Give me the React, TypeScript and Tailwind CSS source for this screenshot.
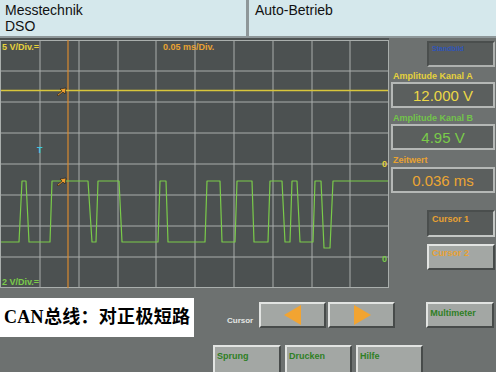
import React from "react";

const font = { fontFamily: '"Liberation Sans", Arial, sans-serif' };

// green channel B trace (svg coords, y offset -38)
const greenTrace: [number, number][] = [
  [1, 204], [19, 204], [22, 143], [26, 143], [29, 204], [50, 204], [52, 143],
  [88, 143], [92, 204], [96, 204], [98, 143], [119, 143], [122, 204], [158, 204],
  [160, 143], [166, 143], [168, 204], [205, 204], [207, 143], [220, 143],
  [222, 204], [235, 204], [237, 143], [252, 143], [254, 204], [268, 204],
  [270, 143], [282, 143], [285, 204], [290, 204], [292, 143], [297, 143],
  [300, 204], [313, 204], [315, 143], [321, 143], [324, 210], [330, 210],
  [333, 143], [388, 143],
];

const vLines = [40, 79, 118, 156, 195, 234, 273, 312, 350];
const hLines = [33, 64, 95, 126, 157, 188, 219];

function CursorMark({ x, y }: { x: number; y: number }) {
  return (
    <polygon
      transform={`translate(${x} ${y})`}
      points="9,0 3,1 5,3 0,7 1,8 6,4 8,6"
      fill="#f0a030"
      stroke="#1a1a1a"
      strokeWidth="0.6"
    />
  );
}

function Scope() {
  return (
    <svg width="389" height="252" viewBox="0 0 389 252" className="block shrink-0">
      <rect x="0" y="0" width="389" height="250" fill="#4c5151" />
      <rect x="0" y="250" width="389" height="2" fill="#6d7170" />
      {vLines.map((x) => (
        <line key={x} x1={x} y1="2" x2={x} y2="250" stroke="#a9aeac" strokeWidth="1" />
      ))}
      {hLines.map((y) => (
        <line key={y} x1="1" y1={y} x2="388" y2={y} stroke="#a9aeac" strokeWidth="1" />
      ))}
      <rect x="0.5" y="2.5" width="388" height="247" fill="none" stroke="#a9aeac" strokeWidth="1" />

      {/* cursor line */}
      <line x1="68" y1="2" x2="68" y2="250" stroke="#d98a30" strokeWidth="1.2" />

      {/* channel A */}
      <line x1="1" y1="52.5" x2="388" y2="52.5" stroke="#d8c63c" strokeWidth="1.3" />
      {/* channel B */}
      <polyline
        points={greenTrace.map((p) => p.join(",")).join(" ")}
        fill="none"
        stroke="#7acb4a"
        strokeWidth="1.2"
        strokeLinejoin="round"
      />

      <CursorMark x={57} y={50} />
      <CursorMark x={57} y={140} />

      <g style={font} fontWeight="bold" fontSize="9">
        <text x="2" y="12" fill="#e6d23c">5 V/Div.=</text>
        <text x="163" y="12" fill="#e8a232">0.05 ms/Div.</text>
        <text x="37" y="115" fill="#3ec8e0">T</text>
        <text x="382" y="129" fill="#e6d23c">0</text>
        <text x="382" y="224" fill="#7acb4a">0</text>
        <text x="2" y="247" fill="#7acb4a">2 V/Div.=</text>
      </g>
    </svg>
  );
}

function ValueBox({ value, color }: { value: string; color: string }) {
  return (
    <div
      className={`ml-[2px] w-[104px] h-[26px] border-2 border-[#b5b8b6] bg-[#5b5f5e] flex items-center justify-center text-[15px] leading-none ${color}`}
    >
      {value}
    </div>
  );
}

function RaisedButton({
  label,
  className,
  children,
}: {
  label?: string;
  className: string;
  children?: React.ReactNode;
}) {
  return (
    <div
      className={`bg-[#a3a7a4] border-2 border-t-[#e2e4e2] border-l-[#e2e4e2] border-b-[#474b4a] border-r-[#474b4a] text-[9px] font-bold text-[#2f7f24] leading-none pl-[2px] pt-[5px] ${className}`}
    >
      {label}
      {children}
    </div>
  );
}

export default function App() {
  return (
    <div className="w-[496px] h-[372px] overflow-hidden bg-[#6d7170] flex flex-col" style={font}>
      {/* header */}
      <div className="flex h-[38px] shrink-0 bg-[#8e9799] gap-[3px] pb-[2px]">
        <div className="w-[246px] bg-[#d5e8ec] pl-[5px] pt-[2px] text-[14px] leading-[16px] text-[#111]">
          <div>Messtechnik</div>
          <div>DSO</div>
        </div>
        <div className="flex-1 bg-[#d5e8ec] pl-[6px] pt-[2px] text-[14px] leading-[16px] text-[#111]">
          Auto-Betrieb
        </div>
      </div>

      {/* scope + side panel */}
      <div className="flex h-[252px] shrink-0">
        <Scope />
        <div className="w-[107px] flex flex-col">
          <div className="mt-[3px] ml-[38px] w-[68px] h-[26px] bg-[#585c5b] border-2 border-t-[#4a4e4d] border-l-[#4a4e4d] border-b-[#aeb1af] border-r-[#aeb1af] text-[7px] font-bold text-[#2f55b8] pl-[3px] pt-[2px] leading-none">
            Standbild
          </div>
          <div className="mt-[4px] h-[11px] pl-[4px] text-[9px] font-bold leading-[11px] text-[#e6d23c]">
            Amplitude Kanal A
          </div>
          <ValueBox value="12.000 V" color="text-[#ecd846]" />
          <div className="mt-[5px] h-[11px] pl-[4px] text-[9px] font-bold leading-[11px] text-[#72c44a]">
            Amplitude Kanal B
          </div>
          <ValueBox value="4.95 V" color="text-[#7acb4a]" />
          <div className="mt-[5px] h-[11px] pl-[4px] text-[9px] font-bold leading-[11px] text-[#e8a232]">
            Zeitwert
          </div>
          <div className="mt-[1px]">
            <ValueBox value="0.036 ms" color="text-[#eca634]" />
          </div>
          <div className="mt-[17px] ml-[38px] w-[68px] h-[27px] bg-[#575b5a] border-2 border-t-[#4a4e4d] border-l-[#4a4e4d] border-b-[#c4c7c5] border-r-[#c4c7c5] text-[9px] font-bold text-[#e8a232] pl-[3px] pt-[3px] leading-none">
            Cursor 1
          </div>
          <div className="mt-[7px] ml-[38px] w-[68px] h-[26px] bg-[#a3a7a4] border-2 border-t-[#e2e4e2] border-l-[#e2e4e2] border-b-[#474b4a] border-r-[#474b4a] text-[9px] font-bold text-[#e8a232] pl-[3px] pt-[3px] leading-none">
            Cursor 2
          </div>
        </div>
      </div>

      {/* bottom controls */}
      <div className="flex h-[55px] shrink-0 items-start">
        <div
          className="mt-[8px] w-[194px] h-[39px] bg-white flex items-center pl-[4px] text-[18px] tracking-[0.3px] font-bold text-black whitespace-nowrap"
          style={{ fontFamily: '"Liberation Serif", "Noto Sans CJK SC", serif' }}
        >
          CAN总线：对正极短路
        </div>
        <div className="ml-[33px] mt-[27px] text-[8px] font-bold text-[#e4e6e4] leading-none">Cursor</div>
        <RaisedButton className="ml-[6px] mt-[12px] w-[67px] h-[26px] flex items-center justify-center !p-0">
          <svg width="18" height="20" viewBox="0 0 18 20">
            <polygon points="17,0 17,20 0,10" fill="#f2a431" />
          </svg>
        </RaisedButton>
        <RaisedButton className="ml-[2px] mt-[12px] w-[67px] h-[26px] flex items-center justify-center !p-0">
          <svg width="18" height="20" viewBox="0 0 18 20">
            <polygon points="1,0 1,20 18,10" fill="#f2a431" />
          </svg>
        </RaisedButton>
        <RaisedButton label="Multimeter" className="ml-[31px] mt-[12px] w-[68px] h-[26px]" />
      </div>
      <div className="flex h-[27px] shrink-0 ml-[213px] gap-[4px]">
        <RaisedButton label="Sprung" className="w-[68px] h-[30px]" />
        <RaisedButton label="Drucken" className="w-[67px] h-[30px]" />
        <RaisedButton label="Hilfe" className="w-[67px] h-[30px]" />
      </div>
    </div>
  );
}
